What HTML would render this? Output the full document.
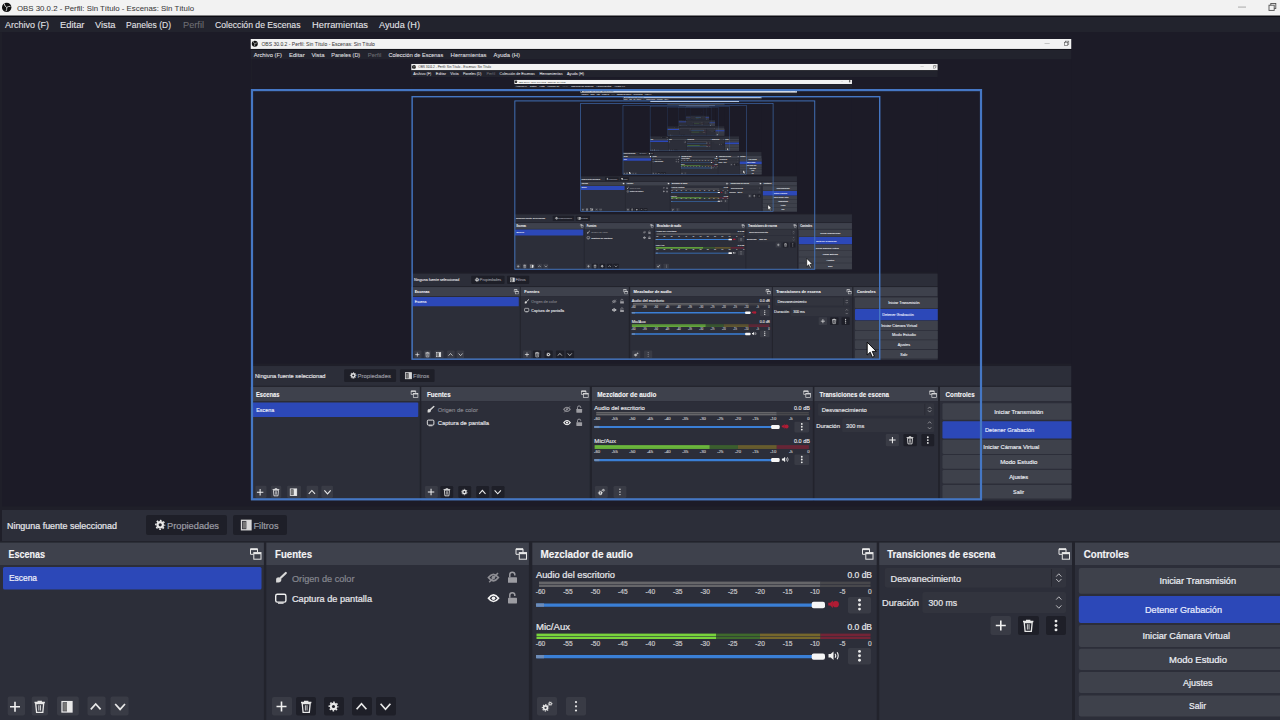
<!DOCTYPE html>
<html><head><meta charset="utf-8"><style>
html,body{margin:0;padding:0;background:#202029;overflow:hidden;width:1280px;height:720px}
svg{display:block}
text{font-family:"Liberation Sans", sans-serif;}
</style></head><body>
<svg width="1280" height="720" viewBox="0 0 1280 720">
<defs>
<clipPath id="cp"><rect x="0" y="0" width="1280" height="720"/></clipPath>
<g id="base" clip-path="url(#cp)">
<rect x="0.00" y="0.00" width="1280.00" height="720.00" fill="#1f1f29" />
<rect x="0.00" y="0.00" width="1280.00" height="15.70" fill="#f2f2f2" />
<rect x="0.00" y="15.70" width="1280.00" height="1.30" fill="#0b0b10" />
<circle cx="6.7" cy="7.4" r="4.7" fill="#111"/>
<path d="M6.7 7.4Q4.6 6.6 4.2 3.4M6.7 7.4Q8.6 6.1 10.4 6.4M6.7 7.4Q7 9.4 6 11.2" fill="none" stroke="#e8e8e8" stroke-width="0.85" />
<text x="17.00" y="10.90" font-size="8" fill="#3a3a3a" textLength="177.00" lengthAdjust="spacingAndGlyphs" stroke="#3a3a3a" stroke-width="0.05">OBS 30.0.2 - Perfil: Sin Título - Escenas: Sin Título</text>
<rect x="1238.00" y="6.70" width="8.00" height="0.70" fill="#8a8a8a" />
<rect x="1270.80" y="3.50" width="5.00" height="5.00" fill="none" stroke="#505050" stroke-width="0.9"/>
<rect x="1269.00" y="5.20" width="5.20" height="5.20" fill="#f2f2f2" stroke="#505050" stroke-width="0.9"/>
<rect x="0.00" y="16.90" width="1280.00" height="15.20" fill="#22232d" />
<text x="5.00" y="27.60" font-size="9" fill="#e4e4e8" textLength="44.00" lengthAdjust="spacingAndGlyphs" stroke="#e4e4e8" stroke-width="0.08">Archivo (F)</text>
<text x="60.00" y="27.60" font-size="9" fill="#e4e4e8" textLength="24.50" lengthAdjust="spacingAndGlyphs" stroke="#e4e4e8" stroke-width="0.08">Editar</text>
<text x="95.00" y="27.60" font-size="9" fill="#e4e4e8" textLength="20.50" lengthAdjust="spacingAndGlyphs" stroke="#e4e4e8" stroke-width="0.08">Vista</text>
<text x="126.00" y="27.60" font-size="9" fill="#e4e4e8" textLength="45.00" lengthAdjust="spacingAndGlyphs" stroke="#e4e4e8" stroke-width="0.08">Paneles (D)</text>
<text x="183.00" y="27.60" font-size="9" fill="#6e6e74" textLength="21.00" lengthAdjust="spacingAndGlyphs" stroke="#6e6e74" stroke-width="0.08">Perfil</text>
<text x="215.00" y="27.60" font-size="9" fill="#e4e4e8" textLength="85.50" lengthAdjust="spacingAndGlyphs" stroke="#e4e4e8" stroke-width="0.08">Colección de Escenas</text>
<text x="312.00" y="27.60" font-size="9" fill="#e4e4e8" textLength="56.00" lengthAdjust="spacingAndGlyphs" stroke="#e4e4e8" stroke-width="0.08">Herramientas</text>
<text x="379.00" y="27.60" font-size="9" fill="#e4e4e8" textLength="41.00" lengthAdjust="spacingAndGlyphs" stroke="#e4e4e8" stroke-width="0.08">Ayuda (H)</text>
<rect x="2.00" y="32.10" width="1278.00" height="474.10" fill="#1c1b27" />
<rect x="2.00" y="510.00" width="1278.00" height="31.00" fill="#2c2e39" />
<text x="7.00" y="528.80" font-size="9" fill="#e6e6ea" textLength="110.00" lengthAdjust="spacingAndGlyphs" stroke="#e6e6ea" stroke-width="0.22">Ninguna fuente seleccionad</text>
<rect x="146.00" y="515.00" width="81.00" height="20.00" fill="#1e1f28" rx="2" />
<circle cx="160.2" cy="524.8" r="3.80" fill="#e8e8e8"/>
<circle cx="160.2" cy="524.8" r="4.40" fill="none" stroke="#e8e8e8" stroke-width="1.50" stroke-dasharray="1.728 1.728" stroke-dashoffset="0.864"/>
<circle cx="160.2" cy="524.8" r="1.60" fill="#1e1f28"/>
<text x="167.00" y="528.80" font-size="9" fill="#9a9ba3" textLength="52.00" lengthAdjust="spacingAndGlyphs" stroke="#9a9ba3" stroke-width="0.22">Propiedades</text>
<rect x="233.00" y="515.00" width="54.00" height="20.00" fill="#1e1f28" rx="2" />
<rect x="241.50" y="520.30" width="9.50" height="9.50" fill="none" stroke="#d8d8d8" stroke-width="1.3"/>
<rect x="246.25" y="520.30" width="4.75" height="9.50" fill="#d8d8d8" />
<rect x="242.70" y="521.50" width="3.55" height="7.10" fill="#777"/>
<text x="253.50" y="528.80" font-size="9" fill="#9a9ba3" textLength="25.00" lengthAdjust="spacingAndGlyphs" stroke="#9a9ba3" stroke-width="0.22">Filtros</text>
<rect x="0.00" y="541.00" width="1280.00" height="179.00" fill="#22232c" />
<rect x="0.00" y="542.60" width="263.90" height="22.40" fill="#3e414c" />
<rect x="0.00" y="565.00" width="263.90" height="155.00" fill="#2c2e39" />
<rect x="266.30" y="542.60" width="262.60" height="22.40" fill="#3e414c" />
<rect x="266.30" y="565.00" width="262.60" height="155.00" fill="#2c2e39" />
<rect x="532.30" y="542.60" width="344.40" height="22.40" fill="#3e414c" />
<rect x="532.30" y="565.00" width="344.40" height="155.00" fill="#2c2e39" />
<rect x="879.20" y="542.60" width="192.80" height="22.40" fill="#3e414c" />
<rect x="879.20" y="565.00" width="192.80" height="155.00" fill="#2c2e39" />
<rect x="1075.00" y="542.60" width="205.00" height="22.40" fill="#3e414c" />
<rect x="1075.00" y="565.00" width="205.00" height="155.00" fill="#2c2e39" />
<text x="8.50" y="557.60" font-size="10" fill="#f4f4f6" textLength="36.50" lengthAdjust="spacingAndGlyphs" font-weight="bold" stroke="#f4f4f6" stroke-width="0.15">Escenas</text>
<text x="275.00" y="557.60" font-size="10" fill="#f4f4f6" textLength="37.00" lengthAdjust="spacingAndGlyphs" font-weight="bold" stroke="#f4f4f6" stroke-width="0.15">Fuentes</text>
<text x="540.50" y="557.60" font-size="10" fill="#f4f4f6" textLength="92.20" lengthAdjust="spacingAndGlyphs" font-weight="bold" stroke="#f4f4f6" stroke-width="0.15">Mezclador de audio</text>
<text x="887.20" y="557.60" font-size="10" fill="#f4f4f6" textLength="108.30" lengthAdjust="spacingAndGlyphs" font-weight="bold" stroke="#f4f4f6" stroke-width="0.15">Transiciones de escena</text>
<text x="1083.70" y="557.60" font-size="10" fill="#f4f4f6" textLength="45.30" lengthAdjust="spacingAndGlyphs" font-weight="bold" stroke="#f4f4f6" stroke-width="0.15">Controles</text>
<path d="M250.5 548.8H257.5V552.0999999999999M250.5 548.8V554.3H253.5" fill="none" stroke="#e8e8e8" stroke-width="1" />
<rect x="250.50" y="548.60" width="7.00" height="1.50" fill="#e8e8e8" />
<rect x="253.80" y="552.60" width="7.20" height="6.60" fill="none" stroke="#e8e8e8" stroke-width="1"/>
<rect x="253.80" y="552.60" width="7.20" height="1.60" fill="#e8e8e8" />
<path d="M516.0 548.8H523.0V552.0999999999999M516.0 548.8V554.3H519.0" fill="none" stroke="#e8e8e8" stroke-width="1" />
<rect x="516.00" y="548.60" width="7.00" height="1.50" fill="#e8e8e8" />
<rect x="519.30" y="552.60" width="7.20" height="6.60" fill="none" stroke="#e8e8e8" stroke-width="1"/>
<rect x="519.30" y="552.60" width="7.20" height="1.60" fill="#e8e8e8" />
<path d="M862.5 548.8H869.5V552.0999999999999M862.5 548.8V554.3H865.5" fill="none" stroke="#e8e8e8" stroke-width="1" />
<rect x="862.50" y="548.60" width="7.00" height="1.50" fill="#e8e8e8" />
<rect x="865.80" y="552.60" width="7.20" height="6.60" fill="none" stroke="#e8e8e8" stroke-width="1"/>
<rect x="865.80" y="552.60" width="7.20" height="1.60" fill="#e8e8e8" />
<path d="M1059.0 548.8H1066.0V552.0999999999999M1059.0 548.8V554.3H1062.0" fill="none" stroke="#e8e8e8" stroke-width="1" />
<rect x="1059.00" y="548.60" width="7.00" height="1.50" fill="#e8e8e8" />
<rect x="1062.30" y="552.60" width="7.20" height="6.60" fill="none" stroke="#e8e8e8" stroke-width="1"/>
<rect x="1062.30" y="552.60" width="7.20" height="1.60" fill="#e8e8e8" />
<rect x="3.00" y="567.00" width="258.50" height="22.50" fill="#2c48b8" rx="1.5" />
<text x="9.00" y="581.30" font-size="9" fill="#eef0fa" textLength="28.00" lengthAdjust="spacingAndGlyphs" stroke="#eef0fa" stroke-width="0.22">Escena</text>
<rect x="7.70" y="696.60" width="17.30" height="19.00" fill="#393b45" rx="2" />
<rect x="31.70" y="696.60" width="16.30" height="19.00" fill="#393b45" rx="2" />
<rect x="57.00" y="696.60" width="21.80" height="19.00" fill="#393b45" rx="2" />
<rect x="87.50" y="696.60" width="18.10" height="19.00" fill="#393b45" rx="2" />
<rect x="110.50" y="696.60" width="18.10" height="19.00" fill="#393b45" rx="2" />
<path d="M10 706.8H20M15 701.8V711.8" fill="none" stroke="#f0f0f0" stroke-width="1.6" />
<path d="M34.5 702.5H44.9M38.14 702.5V701.3H41.26V702.5" fill="none" stroke="#e8e8e8" stroke-width="1.3" />
<path d="M35.748 703.6L36.58 712.4H42.82L43.652 703.6Z" fill="none" stroke="#e8e8e8" stroke-width="1.3" />
<path d="M38.868 705.2V710.6M40.532 705.2V710.6" fill="none" stroke="#e8e8e8" stroke-width="0.9" />
<rect x="62.00" y="701.60" width="10.00" height="10.40" fill="none" stroke="#e8e8e8" stroke-width="1.3"/>
<rect x="67.00" y="701.60" width="5.00" height="10.40" fill="#e8e8e8" />
<rect x="63.20" y="702.80" width="3.80" height="8.00" fill="#777"/>
<path d="M90.8 709.4000000000001L95.7 704.0L100.60000000000001 709.4000000000001" fill="none" stroke="#e8e8e8" stroke-width="1.7" />
<path d="M115.19999999999999 704.0L120.1 709.4000000000001L125.0 704.0" fill="none" stroke="#e8e8e8" stroke-width="1.7" />
<path d="M280.5 578L285.8 573" fill="none" stroke="#d8d8d8" stroke-width="2.2" stroke-linecap="round"/>
<path d="M276.1 582.4V579.4Q276.1 577.2 279.1 577.2L281.5 579.4Q281.1 582.6 278.1 582.4Z" fill="#d8d8d8" />
<text x="292.00" y="581.50" font-size="9" fill="#85868e" textLength="62.50" lengthAdjust="spacingAndGlyphs" stroke="#85868e" stroke-width="0.22">Origen de color</text>
<rect x="275.70" y="594.30" width="10.20" height="7.80" fill="none" rx="1.6" stroke="#f0f0f0" stroke-width="1.4"/>
<path d="M278 603.2H283.6" fill="none" stroke="#f0f0f0" stroke-width="1.1" />
<text x="292.00" y="602.00" font-size="9" fill="#e6e6ea" textLength="80.00" lengthAdjust="spacingAndGlyphs" stroke="#e6e6ea" stroke-width="0.22">Captura de pantalla</text>
<path d="M488.4 577.6Q493.4 571.0 498.4 577.6Q493.4 584.2 488.4 577.6Z" fill="none" stroke="#8e8e94" stroke-width="1.7" />
<circle cx="493.4" cy="577.6" r="1.8" fill="#8e8e94"/>
<path d="M489.2 582.2L498.0 573.0" fill="none" stroke="#8e8e94" stroke-width="1.5" />
<rect x="508.00" y="577.20" width="9.00" height="5.60" fill="#9c9ca2" rx="0.6" />
<path d="M509.8 577.1999999999999V574.5Q509.8 572.1999999999999 512.3 572.1999999999999Q514.8 572.1999999999999 514.8 574.5V575.4" fill="none" stroke="#9c9ca2" stroke-width="1.5" />
<path d="M488.5 598.2Q493.5 591.6 498.5 598.2Q493.5 604.8000000000001 488.5 598.2Z" fill="none" stroke="#f4f4f4" stroke-width="1.7" />
<circle cx="493.5" cy="598.2" r="1.8" fill="#f4f4f4"/>
<rect x="508.00" y="597.80" width="9.00" height="5.60" fill="#9c9ca2" rx="0.6" />
<path d="M509.8 597.8V595.1Q509.8 592.8 512.3 592.8Q514.8 592.8 514.8 595.1V596.0" fill="none" stroke="#9c9ca2" stroke-width="1.5" />
<rect x="272.00" y="697.00" width="20.00" height="18.60" fill="#393b45" rx="2" />
<rect x="296.00" y="697.00" width="20.00" height="18.60" fill="#1e1f28" rx="2" />
<rect x="324.00" y="697.00" width="20.00" height="18.60" fill="#1e1f28" rx="2" />
<rect x="352.00" y="697.00" width="20.00" height="18.60" fill="#1e1f28" rx="2" />
<rect x="376.00" y="697.00" width="20.00" height="18.60" fill="#1e1f28" rx="2" />
<path d="M276.5 706.5H286.5M281.5 701.5V711.5" fill="none" stroke="#f0f0f0" stroke-width="1.6" />
<path d="M301 702.5H311.4M304.64 702.5V701.3H307.76V702.5" fill="none" stroke="#e8e8e8" stroke-width="1.3" />
<path d="M302.248 703.6L303.08 712.4H309.32L310.152 703.6Z" fill="none" stroke="#e8e8e8" stroke-width="1.3" />
<path d="M305.368 705.2V710.6M307.032 705.2V710.6" fill="none" stroke="#e8e8e8" stroke-width="0.9" />
<circle cx="333.5" cy="706.5" r="3.65" fill="#e8e8e8"/>
<circle cx="333.5" cy="706.5" r="4.22" fill="none" stroke="#e8e8e8" stroke-width="1.44" stroke-dasharray="1.659 1.659" stroke-dashoffset="0.829"/>
<circle cx="333.5" cy="706.5" r="1.54" fill="#1e1f28"/>
<path d="M356.6 709.2L361.5 703.8L366.4 709.2" fill="none" stroke="#e8e8e8" stroke-width="1.7" />
<path d="M380.6 703.8L385.5 709.2L390.4 703.8" fill="none" stroke="#e8e8e8" stroke-width="1.7" />
<text x="536.00" y="578.30" font-size="9" fill="#e6e6ea" textLength="79.00" lengthAdjust="spacingAndGlyphs" stroke="#e6e6ea" stroke-width="0.22">Audio del escritorio</text>
<text x="872.00" y="578.40" font-size="9" fill="#e6e6ea" textLength="24.50" lengthAdjust="spacingAndGlyphs" stroke="#e6e6ea" stroke-width="0.22" text-anchor="end">0.0 dB</text>
<rect x="539.00" y="581.60" width="281.50" height="2.40" fill="#666669" />
<rect x="539.00" y="584.60" width="281.50" height="2.40" fill="#666669" />
<rect x="820.50" y="581.60" width="50.00" height="2.40" fill="#48484c" />
<rect x="820.50" y="584.60" width="50.00" height="2.40" fill="#48484c" />
<text x="540.50" y="594.20" font-size="6.6" fill="#c4c4c8" stroke="#c4c4c8" stroke-width="0.22" text-anchor="middle">-60</text>
<text x="567.95" y="594.20" font-size="6.6" fill="#c4c4c8" stroke="#c4c4c8" stroke-width="0.22" text-anchor="middle">-55</text>
<text x="595.40" y="594.20" font-size="6.6" fill="#c4c4c8" stroke="#c4c4c8" stroke-width="0.22" text-anchor="middle">-50</text>
<text x="622.85" y="594.20" font-size="6.6" fill="#c4c4c8" stroke="#c4c4c8" stroke-width="0.22" text-anchor="middle">-45</text>
<text x="650.30" y="594.20" font-size="6.6" fill="#c4c4c8" stroke="#c4c4c8" stroke-width="0.22" text-anchor="middle">-40</text>
<text x="677.75" y="594.20" font-size="6.6" fill="#c4c4c8" stroke="#c4c4c8" stroke-width="0.22" text-anchor="middle">-35</text>
<text x="705.20" y="594.20" font-size="6.6" fill="#c4c4c8" stroke="#c4c4c8" stroke-width="0.22" text-anchor="middle">-30</text>
<text x="732.65" y="594.20" font-size="6.6" fill="#c4c4c8" stroke="#c4c4c8" stroke-width="0.22" text-anchor="middle">-25</text>
<text x="760.10" y="594.20" font-size="6.6" fill="#c4c4c8" stroke="#c4c4c8" stroke-width="0.22" text-anchor="middle">-20</text>
<text x="787.55" y="594.20" font-size="6.6" fill="#c4c4c8" stroke="#c4c4c8" stroke-width="0.22" text-anchor="middle">-15</text>
<text x="815.00" y="594.20" font-size="6.6" fill="#c4c4c8" stroke="#c4c4c8" stroke-width="0.22" text-anchor="middle">-10</text>
<text x="842.45" y="594.20" font-size="6.6" fill="#c4c4c8" stroke="#c4c4c8" stroke-width="0.22" text-anchor="middle">-5</text>
<text x="869.90" y="594.20" font-size="6.6" fill="#c4c4c8" stroke="#c4c4c8" stroke-width="0.22" text-anchor="middle">0</text>
<rect x="536.00" y="603.40" width="277.00" height="3.30" fill="#3a7fd6" rx="1" />
<rect x="536.00" y="603.40" width="8.00" height="3.30" fill="#6d8cb8" />
<rect x="811.70" y="601.80" width="13.30" height="6.40" fill="#f6f6f6" rx="2" />
<path d="M828.3 602.8000000000001H830.3L832.9 600.5V607.9000000000001L830.3 605.6H828.3Z" fill="#b01c34" />
<circle cx="835.8" cy="604.2" r="3.1" fill="#b01c34"/>
<rect x="848.00" y="597.00" width="23.00" height="16.50" fill="#393b45" rx="2" />
<circle cx="859.5" cy="600.30" r="1.45" fill="#e8e8e8"/>
<circle cx="859.5" cy="604.70" r="1.45" fill="#e8e8e8"/>
<circle cx="859.5" cy="609.10" r="1.45" fill="#e8e8e8"/>
<text x="536.00" y="629.70" font-size="9" fill="#e6e6ea" textLength="34.00" lengthAdjust="spacingAndGlyphs" stroke="#e6e6ea" stroke-width="0.22">Mic/Aux</text>
<text x="872.00" y="629.60" font-size="9" fill="#e6e6ea" textLength="24.50" lengthAdjust="spacingAndGlyphs" stroke="#e6e6ea" stroke-width="0.22" text-anchor="end">0.0 dB</text>
<rect x="536.50" y="633.60" width="179.50" height="2.40" fill="#78d43c" />
<rect x="716.00" y="633.60" width="44.00" height="2.40" fill="#3f6a2c" />
<rect x="760.00" y="633.60" width="60.50" height="2.40" fill="#75672c" />
<rect x="820.50" y="633.60" width="50.00" height="2.40" fill="#742436" />
<rect x="536.50" y="636.60" width="179.50" height="2.40" fill="#78d43c" />
<rect x="716.00" y="636.60" width="44.00" height="2.40" fill="#3f6a2c" />
<rect x="760.00" y="636.60" width="60.50" height="2.40" fill="#75672c" />
<rect x="820.50" y="636.60" width="50.00" height="2.40" fill="#742436" />
<text x="540.50" y="646.20" font-size="6.6" fill="#c4c4c8" stroke="#c4c4c8" stroke-width="0.22" text-anchor="middle">-60</text>
<text x="567.95" y="646.20" font-size="6.6" fill="#c4c4c8" stroke="#c4c4c8" stroke-width="0.22" text-anchor="middle">-55</text>
<text x="595.40" y="646.20" font-size="6.6" fill="#c4c4c8" stroke="#c4c4c8" stroke-width="0.22" text-anchor="middle">-50</text>
<text x="622.85" y="646.20" font-size="6.6" fill="#c4c4c8" stroke="#c4c4c8" stroke-width="0.22" text-anchor="middle">-45</text>
<text x="650.30" y="646.20" font-size="6.6" fill="#c4c4c8" stroke="#c4c4c8" stroke-width="0.22" text-anchor="middle">-40</text>
<text x="677.75" y="646.20" font-size="6.6" fill="#c4c4c8" stroke="#c4c4c8" stroke-width="0.22" text-anchor="middle">-35</text>
<text x="705.20" y="646.20" font-size="6.6" fill="#c4c4c8" stroke="#c4c4c8" stroke-width="0.22" text-anchor="middle">-30</text>
<text x="732.65" y="646.20" font-size="6.6" fill="#c4c4c8" stroke="#c4c4c8" stroke-width="0.22" text-anchor="middle">-25</text>
<text x="760.10" y="646.20" font-size="6.6" fill="#c4c4c8" stroke="#c4c4c8" stroke-width="0.22" text-anchor="middle">-20</text>
<text x="787.55" y="646.20" font-size="6.6" fill="#c4c4c8" stroke="#c4c4c8" stroke-width="0.22" text-anchor="middle">-15</text>
<text x="815.00" y="646.20" font-size="6.6" fill="#c4c4c8" stroke="#c4c4c8" stroke-width="0.22" text-anchor="middle">-10</text>
<text x="842.45" y="646.20" font-size="6.6" fill="#c4c4c8" stroke="#c4c4c8" stroke-width="0.22" text-anchor="middle">-5</text>
<text x="869.90" y="646.20" font-size="6.6" fill="#c4c4c8" stroke="#c4c4c8" stroke-width="0.22" text-anchor="middle">0</text>
<rect x="536.00" y="655.00" width="277.00" height="3.30" fill="#3a7fd6" rx="1" />
<rect x="536.00" y="655.00" width="8.00" height="3.30" fill="#6d8cb8" />
<rect x="811.70" y="653.40" width="13.30" height="6.40" fill="#f6f6f6" rx="2" />
<path d="M828.5 654H830.7L833.5 651.5V660L830.7 657.5H828.5Z" fill="#f0f0f0" />
<path d="M835.1 653.8Q836.5 655.75 835.1 657.7M837.1 652.3Q839.3 655.75 837.1 659.2" fill="none" stroke="#f0f0f0" stroke-width="1.1" />
<rect x="848.00" y="648.00" width="23.00" height="16.50" fill="#393b45" rx="2" />
<circle cx="859.5" cy="651.40" r="1.45" fill="#e8e8e8"/>
<circle cx="859.5" cy="655.80" r="1.45" fill="#e8e8e8"/>
<circle cx="859.5" cy="660.20" r="1.45" fill="#e8e8e8"/>
<rect x="537.00" y="697.00" width="20.00" height="18.60" fill="#393b45" rx="2" />
<circle cx="545.5" cy="707.8" r="2.74" fill="#e8e8e8"/>
<circle cx="545.5" cy="707.8" r="3.17" fill="none" stroke="#e8e8e8" stroke-width="1.08" stroke-dasharray="1.244 1.244" stroke-dashoffset="0.622"/>
<circle cx="545.5" cy="707.8" r="1.15" fill="#393b45"/>
<circle cx="550.2" cy="703.6999999999999" r="1.67" fill="#e8e8e8"/>
<circle cx="550.2" cy="703.6999999999999" r="1.94" fill="none" stroke="#e8e8e8" stroke-width="0.66" stroke-dasharray="0.760 0.760" stroke-dashoffset="0.380"/>
<circle cx="550.2" cy="703.6999999999999" r="0.70" fill="#393b45"/>
<rect x="566.00" y="697.00" width="20.00" height="18.60" fill="#393b45" rx="2" />
<circle cx="576" cy="702.10" r="1.1" fill="#e8e8e8"/>
<circle cx="576" cy="706.30" r="1.1" fill="#e8e8e8"/>
<circle cx="576" cy="710.50" r="1.1" fill="#e8e8e8"/>
<rect x="884.80" y="568.00" width="181.20" height="19.60" fill="#32343e" rx="2" />
<rect x="1051.00" y="569.00" width="0.80" height="17.60" fill="#24252e" />
<text x="890.50" y="582.00" font-size="9" fill="#e6e6ea" textLength="70.50" lengthAdjust="spacingAndGlyphs" stroke="#e6e6ea" stroke-width="0.22">Desvanecimiento</text>
<path d="M1056.2 576.6L1058.8 573.8000000000001L1061.3999999999999 576.6" fill="none" stroke="#c8c8cc" stroke-width="0.9" />
<path d="M1056.2 578.9999999999999L1058.8 581.7999999999998L1061.3999999999999 578.9999999999999" fill="none" stroke="#c8c8cc" stroke-width="0.9" />
<text x="882.00" y="606.40" font-size="9" fill="#e6e6ea" textLength="37.00" lengthAdjust="spacingAndGlyphs" stroke="#e6e6ea" stroke-width="0.22">Duración</text>
<rect x="922.50" y="592.00" width="143.50" height="21.00" fill="#32343e" rx="2" />
<text x="928.50" y="606.40" font-size="9" fill="#e6e6ea" textLength="28.50" lengthAdjust="spacingAndGlyphs" stroke="#e6e6ea" stroke-width="0.22">300 ms</text>
<path d="M1056.2 599.6L1058.8 596.8000000000001L1061.3999999999999 599.6" fill="none" stroke="#c8c8cc" stroke-width="0.9" />
<path d="M1056.2 605.4L1058.8 608.1999999999999L1061.3999999999999 605.4" fill="none" stroke="#c8c8cc" stroke-width="0.9" />
<rect x="990.50" y="616.00" width="20.50" height="19.00" fill="#393b45" rx="2" />
<rect x="1018.00" y="616.00" width="21.00" height="19.00" fill="#1e1f28" rx="2" />
<rect x="1046.00" y="616.00" width="20.00" height="19.00" fill="#1e1f28" rx="2" />
<path d="M995.8 625.5H1005.8M1000.8 620.5V630.5" fill="none" stroke="#f0f0f0" stroke-width="1.6" />
<path d="M1023 621.5H1033.4M1026.64 621.5V620.3H1029.76V621.5" fill="none" stroke="#e8e8e8" stroke-width="1.3" />
<path d="M1024.248 622.6L1025.08 631.4H1031.32L1032.152 622.6Z" fill="none" stroke="#e8e8e8" stroke-width="1.3" />
<path d="M1027.368 624.2V629.6M1029.032 624.2V629.6" fill="none" stroke="#e8e8e8" stroke-width="0.9" />
<circle cx="1056" cy="621.10" r="1.45" fill="#e8e8e8"/>
<circle cx="1056" cy="625.50" r="1.45" fill="#e8e8e8"/>
<circle cx="1056" cy="629.90" r="1.45" fill="#e8e8e8"/>
<rect x="1078.80" y="568.00" width="210.00" height="25.80" fill="#3e414b" rx="2" />
<text x="1159.50" y="584.20" font-size="9" fill="#eceef4" textLength="76.50" lengthAdjust="spacingAndGlyphs" stroke="#eceef4" stroke-width="0.22">Iniciar Transmisión</text>
<rect x="1078.80" y="596.00" width="210.00" height="27.00" fill="#2c48b8" rx="2" />
<text x="1145.00" y="612.80" font-size="9" fill="#e8ecff" textLength="77.00" lengthAdjust="spacingAndGlyphs" stroke="#e8ecff" stroke-width="0.22">Detener Grabación</text>
<rect x="1078.80" y="625.00" width="210.00" height="22.00" fill="#3e414b" rx="2" />
<text x="1142.50" y="639.30" font-size="9" fill="#eceef4" textLength="87.50" lengthAdjust="spacingAndGlyphs" stroke="#eceef4" stroke-width="0.22">Iniciar Cámara Virtual</text>
<rect x="1078.80" y="648.80" width="210.00" height="21.20" fill="#3e414b" rx="2" />
<text x="1169.00" y="662.70" font-size="9" fill="#eceef4" textLength="58.00" lengthAdjust="spacingAndGlyphs" stroke="#eceef4" stroke-width="0.22">Modo Estudio</text>
<rect x="1078.80" y="672.00" width="210.00" height="21.00" fill="#3e414b" rx="2" />
<text x="1183.00" y="685.80" font-size="9" fill="#eceef4" textLength="29.50" lengthAdjust="spacingAndGlyphs" stroke="#eceef4" stroke-width="0.22">Ajustes</text>
<rect x="1078.80" y="695.50" width="210.00" height="21.00" fill="#3e414b" rx="2" />
<text x="1189.00" y="709.30" font-size="9" fill="#eceef4" textLength="17.00" lengthAdjust="spacingAndGlyphs" stroke="#eceef4" stroke-width="0.22">Salir</text>
</g>
<g id="ov">
<rect x="252.00" y="90.10" width="729.00" height="409.20" fill="none" stroke="#4577c4" stroke-width="2.2"/>
<path d="M867.2 342.2V355L870.2 352.2L872.4 357.2L874.4 356.3L872.3 351.4H876.3Z" fill="#ffffff" stroke="#000" stroke-width="0.9" stroke-linejoin="round"/>
</g>
</defs>
<use href="#base"/>
<use href="#base" transform="translate(250.500 38.900) scale(0.641400)"/>
<use href="#base" transform="translate(411.171 63.850) scale(0.411394)"/>
<use href="#base" transform="translate(514.225 79.854) scale(0.263868)"/>
<use href="#base" transform="translate(580.324 90.118) scale(0.169245)"/>
<use href="#base" transform="translate(622.720 96.702) scale(0.108554)"/>
<use href="#base" transform="translate(649.912 100.925) scale(0.069626)"/>
<use href="#base" transform="translate(667.354 103.633) scale(0.044658)"/>
<use href="#base" transform="translate(678.541 105.370) scale(0.028644)"/>
<use href="#base" transform="translate(685.716 106.484) scale(0.018372)"/>
<use href="#ov" transform="translate(685.716 106.484) scale(0.018372)"/>
<use href="#ov" transform="translate(678.541 105.370) scale(0.028644)"/>
<use href="#ov" transform="translate(667.354 103.633) scale(0.044658)"/>
<use href="#ov" transform="translate(649.912 100.925) scale(0.069626)"/>
<use href="#ov" transform="translate(622.720 96.702) scale(0.108554)"/>
<use href="#ov" transform="translate(580.324 90.118) scale(0.169245)"/>
<use href="#ov" transform="translate(514.225 79.854) scale(0.263868)"/>
<use href="#ov" transform="translate(411.171 63.850) scale(0.411394)"/>
<use href="#ov" transform="translate(250.500 38.900) scale(0.641400)"/>
<use href="#ov"/>
</svg>
</body></html>
